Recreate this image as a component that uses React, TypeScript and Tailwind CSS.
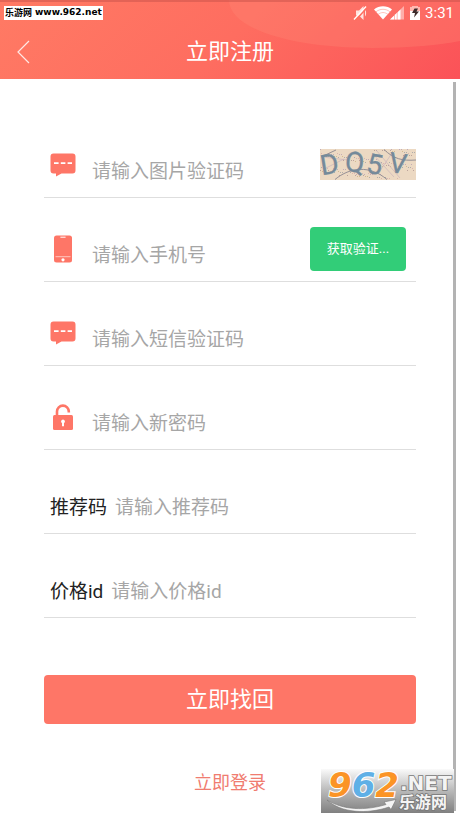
import React from 'react';

const MessageIcon: React.FC = () => (
  <svg viewBox="0 0 26 24" className="w-[26px] h-6" aria-hidden="true">
    <path
      d="M3.5 0.5h19a3 3 0 0 1 3 3v14a3 3 0 0 1-3 3H11.5L6 23.5V20.5H3.5a3 3 0 0 1-3-3v-14a3 3 0 0 1 3-3z"
      fill="#fe7667"
    />
    <path d="M4 10.2h4.6M10.8 10.2h4.6M17.6 10.2h4.4" stroke="#fff" strokeWidth="1.8" />
  </svg>
);

const PhoneIcon: React.FC = () => (
  <svg viewBox="0 0 26 28" className="w-[26px] h-7" aria-hidden="true">
    <rect x="4" y="0.5" width="18" height="27" rx="2.5" fill="#fe7667" />
    <path d="M10.8 2.2h4.4" stroke="#fff" strokeWidth="1" strokeLinecap="round" />
    <path d="M5.5 21.7h15" stroke="#ffd9d3" strokeWidth="0.8" />
    <circle cx="13" cy="24.8" r="1.6" fill="#fff" />
  </svg>
);

const LockIcon: React.FC = () => (
  <svg viewBox="0 0 26 26" className="w-[26px] h-[26px]" aria-hidden="true">
    <path d="M7 11.5V7.5a5.9 5.9 0 0 1 11.8 0v1" fill="none" stroke="#fe7667" strokeWidth="2.6" />
    <rect x="3" y="11" width="20" height="15" rx="1.5" fill="#fe7667" />
    <path d="M13 15.4a2 2 0 0 1 1 3.7v3.2h-2v-3.2a2 2 0 0 1 1-3.7z" fill="#fff" />
  </svg>
);

const StatusIcons: React.FC = () => (
  <svg viewBox="0 0 68 16" className="w-[68px] h-4" aria-hidden="true">
    <g fill="#ffe3df">
      <path d="M3 5.5h3L10.5 1v14L6 10.5H3z" />
      <path d="M12 4.5c1.5 1.5 1.5 5.5 0 7z" />
    </g>
    <path d="M2.4 15.4L14.5 2" stroke="#ff6f60" strokeWidth="1.6" />
    <path d="M1 14.5L13 1.5" stroke="#fff" strokeWidth="1.3" />
    <path d="M30 14.5L21 4.5c5-4.2 13-4.2 18 0z" fill="#fff" />
    <path
      d="M22.8 7c4-3.6 10.4-3.6 14.4 0M25 9.5c3-2.6 7-2.6 10 0"
      fill="none"
      stroke="#ff9a8e"
      strokeWidth="0.6"
    />
    <path d="M51 1v13.5H37z" fill="#fff" opacity="0.45" />
    <path d="M47.5 4.4v10.1H37z" fill="#fff" />
    <path d="M41.5 9v6M44.2 7v8" stroke="#ff8a7d" strokeWidth="0.6" />
    <path d="M57 2.5h2.5V1h5v1.5H67V15H57z" fill="#fff" />
    <path d="M57 2.5h2.5V1h5v1.5H67V6H57z" fill="#ffb8b0" />
    <path d="M61.5 3.5H65l-1.500 3H66l-5 6 1-4.500h-3z" fill="#3d2a2a" />
  </svg>
);

const speckColors = ['#9b7fa8', '#c98f9b', '#6f7f8f', '#b89a5a', '#8a6a72'];

const Captcha: React.FC = () => (
  <svg viewBox="0 0 96 31" className="w-24 h-[31px] block overflow-visible" role="img" aria-label="DQ5V">
    <rect width="96" height="31" fill="#ecd9c3" />
    {Array.from({ length: 130 }, (_, i) => (
      <rect
        key={i}
        x={(i * 37 + (i % 7) * 11) % 95}
        y={(i * 17 + (i % 5) * 7) % 30}
        width="0.9"
        height="0.9"
        fill={speckColors[i % 5]}
        opacity="0.6"
      />
    ))}
    <path
      d="M2 8l26 3M4 20l20-10M56 1l24 28M52 4l22 24M60 22l12-18"
      fill="none"
      stroke="#c4aebb"
      strokeWidth="0.6"
    />
    <g fill="none" stroke="#8b8790" strokeWidth="0.9">
      <path d="M15 30.5C30 18 50 16 67 30.500" />
      <path d="M64 0.500C74 10 82 12 96 11" />
      <path d="M1 8L16 1" />
    </g>
    <g
      fill="#758a9a"
      stroke="#758a9a"
      strokeWidth="0.3"
      fontFamily="Roboto"
      fontSize="28"
    >
      <text x="0" y="25" transform="rotate(-9 9 14)">D</text>
      <text x="25" y="23" transform="rotate(4 35 14)">Q</text>
      <text x="47" y="25" transform="rotate(10 55 14)">5</text>
      <text x="69" y="24" transform="rotate(8 78 14)">V</text>
    </g>
  </svg>
);

const Watermark: React.FC = () => (
  <svg
    viewBox="0 0 133 44"
    className="w-[133px] h-11 block overflow-visible"
    role="img"
    aria-label="962.NET 乐游网"
  >
    <defs>
      <linearGradient id="shade" x1="0" y1="0" x2="0" y2="1">
        <stop offset="0" stopColor="#fafafa" />
        <stop offset="0.5" stopColor="#b8b8b8" />
        <stop offset="1" stopColor="#808080" />
      </linearGradient>
    </defs>
    <rect width="133" height="44" fill="url(#shade)" />
    <text
      x="7"
      y="28"
      fontFamily="DejaVu Sans"
      fontWeight="bold"
      fontStyle="italic"
      fontSize="34"
      stroke="#fff"
      strokeWidth="2"
      paintOrder="stroke"
    >
      <tspan fill="#fb9426">9</tspan>
      <tspan fill="#5fb0e6">6</tspan>
      <tspan fill="#fb9426">2</tspan>
    </text>
    <path
      d="M6 31C22 41 44 42 65 35.500L63 33L75 30.500L70 40.500L68 38C46 45.500 20 44 6 31z"
      fill="#f4f4f4"
      stroke="#777"
      strokeWidth="0.6"
    />
    <g fill="#f4f4f4" stroke="#777" strokeWidth="1.6" paintOrder="stroke" fontWeight="bold">
      <text x="79" y="21" fontFamily="DejaVu Sans" fontSize="20">.NET</text>
      <text x="78" y="39" fontFamily="Noto Sans CJK SC" fontSize="16">乐游网</text>
    </g>
  </svg>
);

interface FieldProps {
  id: string;
  placeholder: string;
  type?: string;
  icon?: React.ReactNode;
  label?: string;
  children?: React.ReactNode;
}

const Field: React.FC<FieldProps> = ({ id, placeholder, type = 'text', icon, label, children }) => (
  <div className="flex items-center h-[84px] pt-[18px] pl-1.5 border-b border-[#dedede]">
    {icon && (
      <label htmlFor={id} className="shrink-0 mr-4">
        {icon}
      </label>
    )}
    {label && (
      <label htmlFor={id} className="shrink-0 mr-2 pt-3.5 text-[19px] leading-7 text-[#222]">
        {label}
      </label>
    )}
    <input
      id={id}
      type={type}
      placeholder={placeholder}
      aria-label={label ?? placeholder}
      className="flex-1 min-w-0 pt-3.5 text-[19px] leading-7 text-[#222] placeholder:text-[#a6a6a6] outline-none"
    />
    {children}
  </div>
);

const Header: React.FC = () => (
  <header className="relative h-[79px] bg-linear-135 from-[#ff7a64] via-[#fe6d60] to-[#fb5258] text-white overflow-hidden">
    <svg
      viewBox="0 0 460 79"
      preserveAspectRatio="none"
      className="absolute inset-0 w-full h-full"
      aria-hidden="true"
    >
      <path d="M229 0C229 29 292 48 372 48C410 48 440 45 460 41V0z" fill="#ff8a78" opacity="0.3" />
      <rect width="460" height="2" fill="#c8524a" opacity="0.5" />
    </svg>
    <div className="relative flex items-center justify-between h-[25px] pl-1 pr-1.5">
      <p className="flex items-center h-3.5 px-px gap-[3px] bg-white text-black font-bold leading-none">
        <span className="font-['Noto_Sans_CJK_SC'] text-[9px]">乐游网</span>
        <span className="font-['DejaVu_Sans'] text-[9px]">www.962.net</span>
      </p>
      <div className="flex items-center gap-1">
        <StatusIcons />
        <span className="text-[15px] leading-5">3:31</span>
      </div>
    </div>
    <div className="relative flex items-center h-[54px] px-4">
      <button type="button" aria-label="返回" className="w-6">
        <svg viewBox="0 0 14 24" className="w-3.5 h-6" aria-hidden="true">
          <path d="M13 1L2 12l11 11" fill="none" stroke="#ffe9e5" strokeWidth="1.2" />
        </svg>
      </button>
      <h1 className="flex-1 mr-6 text-center text-[22px] leading-8">立即注册</h1>
    </div>
  </header>
);

const App: React.FC = () => {
  return (
    <div className="flex flex-col min-h-screen bg-white font-['Roboto','Noto_Sans_CJK_SC',sans-serif]">
      <Header />
      <main className="relative flex-1 px-11 pt-[35px]">
        <form onSubmit={(e) => e.preventDefault()}>
          <Field id="captcha" placeholder="请输入图片验证码" icon={<MessageIcon />}>
            <button type="button" className="shrink-0">
              <Captcha />
            </button>
          </Field>
          <Field id="phone" type="tel" placeholder="请输入手机号" icon={<PhoneIcon />}>
            <button
              type="button"
              className="shrink-0 w-24 h-11 mr-2.5 rounded bg-[#32cd78] text-white text-[13px]"
            >
              获取验证...
            </button>
          </Field>
          <Field id="sms" placeholder="请输入短信验证码" icon={<MessageIcon />} />
          <Field id="password" type="password" placeholder="请输入新密码" icon={<LockIcon />} />
          <Field id="referral" placeholder="请输入推荐码" label="推荐码" />
          <Field id="price" placeholder="请输入价格id" label="价格id" />
          <button
            type="submit"
            className="w-full h-[49px] mt-[57px] rounded bg-[#fe7667] text-white text-[22px] leading-8"
          >
            立即找回
          </button>
        </form>
        <p className="mt-[45px] text-center">
          <a href="#login" className="text-[18px] leading-7 text-[#f07c70]">
            立即登录
          </a>
        </p>
        <div className="absolute right-1 top-[3px] bottom-2 w-[3px] bg-[#b3b3b3]" />
        <div className="absolute right-1.5 bottom-1.5">
          <Watermark />
        </div>
      </main>
    </div>
  );
};

export default App;
